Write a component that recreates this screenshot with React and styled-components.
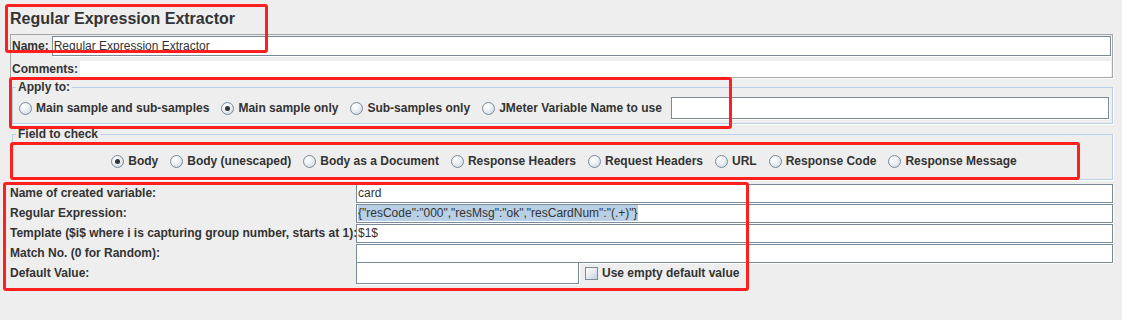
import React from "react";
import styled, { createGlobalStyle } from "styled-components";

const GlobalStyle = createGlobalStyle`
  html, body { margin: 0; padding: 0; background: #eeeeee; }
  body { font-family: "Liberation Sans", Arial, sans-serif; color: #333333; }
`;

const Page = styled.div`
  position: relative;
  width: 1122px;
  height: 320px;
  box-sizing: border-box;
  padding: 0 9px 0 10px;
  background: #eeeeee;
  overflow: hidden;
`;

const Title = styled.h1`
  margin: 0;
  height: 34px;
  box-sizing: border-box;
  padding-top: 10px;
  font-size: 16px;
  line-height: 18px;
  font-weight: bold;
  color: #333333;
`;

const NamePanel = styled.div`
  width: 1103px;
  border: 1px solid #a6a6a6;
  box-shadow: 1px 1px 0 #ffffff;
  padding: 1px 1px 0 1px;
  box-sizing: border-box;
`;

const NameRow = styled.div`
  display: flex;
  align-items: center;
  gap: ${(p) => p.$gap}px;
  height: ${(p) => p.$h}px;
  margin-top: ${(p) => p.$mt || 0}px;
`;

const Label = styled.span`
  font-size: 12px;
  line-height: 14px;
  font-weight: bold;
  color: #333333;
  white-space: nowrap;
  flex: none;
`;

const TextField = styled.div`
  box-sizing: border-box;
  height: ${(p) => p.$h || 20}px;
  ${(p) => (p.$w ? `width: ${p.$w}px; flex: none;` : "flex: 1;")}
  background: #ffffff;
  border: 1px solid #7a8a99;
  box-shadow: 1px 1px 0 #ffffff;
  padding-left: 1px;
  font-size: 12px;
  color: #333333;
  display: flex;
  align-items: center;
  white-space: nowrap;
  overflow: hidden;
  margin-left: ${(p) => p.$ml || 0}px;
`;

const Selected = styled.span`
  background: #b8cfe5;
  line-height: 16px;
`;

const CommentArea = styled.div`
  flex: 1;
  height: 16px;
  background: #ffffff;
`;

const TitledPanel = styled.fieldset`
  margin: ${(p) => p.$mt}px 0 0 2px;
  min-width: 0;
  border: 1px solid #b8cfe5;
  box-shadow: 1px 1px 0 #ffffff;
  padding: ${(p) => p.$pad};
`;

const Legend = styled.legend`
  margin-left: -3px;
  padding: 0 2px;
  font-size: 12px;
  line-height: 14px;
  font-weight: bold;
  color: #333333;
`;

const RadioRow = styled.div`
  display: flex;
  align-items: center;
  gap: 12px;
  height: ${(p) => p.$h}px;
  justify-content: ${(p) => (p.$center ? "center" : "flex-start")};
`;

const Option = styled.label`
  display: inline-flex;
  align-items: center;
  gap: 4px;
  font-size: 12px;
  line-height: 14px;
  font-weight: bold;
  color: #333333;
  white-space: nowrap;
  flex: none;
`;

const RadioCircle = styled.span`
  width: 13px;
  height: 13px;
  box-sizing: border-box;
  border-radius: 50%;
  border: 1px solid #7a8a99;
  background: radial-gradient(circle at 35% 30%, #ffffff 0%, #eef2f6 40%, #c3d0dd 100%);
  display: inline-flex;
  align-items: center;
  justify-content: center;
  flex: none;
  &::after {
    content: "";
    width: 5px;
    height: 5px;
    border-radius: 50%;
    background: #333333;
    display: ${(p) => (p.$checked ? "block" : "none")};
  }
`;

const CheckBox = styled.span`
  width: 13px;
  height: 13px;
  box-sizing: border-box;
  border: 1px solid #7a8a99;
  background: linear-gradient(135deg, #ffffff 0%, #e4eaf0 50%, #c3d0dd 100%);
  flex: none;
`;

const Form = styled.div`
  display: grid;
  grid-template-columns: 346px 1fr;
  grid-auto-rows: 20px;
  align-items: center;
  margin-top: 3px;
`;

const FieldCell = styled.div`
  display: flex;
  align-items: center;
  height: ${(p) => p.$h || 20}px;
  gap: ${(p) => p.$gap || 0}px;
`;

const Annotation = styled.div`
  position: absolute;
  left: ${(p) => p.$x}px;
  top: ${(p) => p.$y}px;
  width: ${(p) => p.$w}px;
  height: ${(p) => p.$h}px;
  box-sizing: border-box;
  border: 3px solid #ff1f1f;
  border-radius: 3px;
  pointer-events: none;
`;

const Radio = ({ checked, children }) => (
  <Option>
    <RadioCircle $checked={checked} />
    {children}
  </Option>
);

const fields = [
  "Body",
  "Body (unescaped)",
  "Body as a Document",
  "Response Headers",
  "Request Headers",
  "URL",
  "Response Code",
  "Response Message",
];

export default function App() {
  return (
    <>
      <GlobalStyle />
      <Page>
        <Title>Regular Expression Extractor</Title>
        <NamePanel>
          <NameRow $gap={3} $h={20}>
            <Label>Name:</Label>
            <TextField $h={20}>Regular Expression Extractor</TextField>
          </NameRow>
          <NameRow $gap={2} $h={16} $mt={5}>
            <Label>Comments:</Label>
            <CommentArea />
          </NameRow>
        </NamePanel>

        <TitledPanel $mt={2} $pad="3px 3px 4px 6px">
          <Legend>Apply to:</Legend>
          <RadioRow $h={22}>
            <Radio>Main sample and sub-samples</Radio>
            <Radio checked>Main sample only</Radio>
            <Radio>Sub-samples only</Radio>
            <Radio>JMeter Variable Name to use</Radio>
            <TextField $h={22} $ml={-3} />
          </RadioRow>
        </TitledPanel>

        <TitledPanel $mt={3} $pad="10px 3px 8px 6px">
          <Legend>Field to check</Legend>
          <RadioRow $h={20} $center>
            {fields.map((f, i) => (
              <Radio key={f} checked={i === 0}>
                {f}
              </Radio>
            ))}
          </RadioRow>
        </TitledPanel>

        <Form>
          <Label>Name of created variable:</Label>
          <FieldCell>
            <TextField $h={19}>card</TextField>
          </FieldCell>
          <Label>Regular Expression:</Label>
          <FieldCell>
            <TextField $h={19}>
              <Selected>{'{"resCode":"000","resMsg":"ok","resCardNum":"(.+)"}'}</Selected>
            </TextField>
          </FieldCell>
          <Label>Template ($i$ where i is capturing group number, starts at 1):</Label>
          <FieldCell>
            <TextField $h={19}>$1$</TextField>
          </FieldCell>
          <Label>Match No. (0 for Random):</Label>
          <FieldCell>
            <TextField $h={19} />
          </FieldCell>
          <Label>Default Value:</Label>
          <FieldCell $h={22} $gap={6}>
            <TextField $h={22} $w={223} />
            <Option>
              <CheckBox />
              Use empty default value
            </Option>
          </FieldCell>
        </Form>

        <Annotation $x={5} $y={4} $w={263} $h={49} />
        <Annotation $x={9} $y={77} $w={723} $h={52} />
        <Annotation $x={10} $y={142} $w={1070} $h={38} />
        <Annotation $x={3} $y={182} $w={746} $h={109} />
      </Page>
    </>
  );
}
